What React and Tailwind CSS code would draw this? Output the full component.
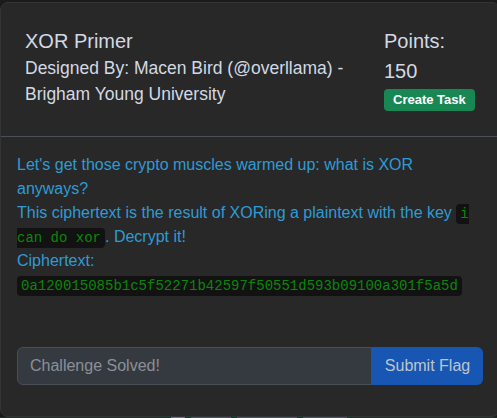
import React from 'react';

const Code = ({ children }) => (
  <code
    className="rounded-[4px] bg-[#121212] px-[4px] py-[2px] text-[14px] leading-none text-[#0b860b]"
    style={{ fontFamily: '"Liberation Mono", monospace' }}
  >
    {children}
  </code>
);

const App = () => {
  return (
    <div
      className="h-[418px] w-[497px] overflow-hidden bg-[#1b1b1b]"
      style={{ fontFamily: '"Liberation Sans", Arial, sans-serif' }}
    >
      <div className="mt-[2px] w-[500px] rounded-[8px] border border-[#333436] bg-[#282828] pb-[31px]">
        {/* header */}
        <div className="flex border-b border-[#4b4f56] pl-[24px] pt-[26px] pb-[25px] text-[#d2d9e5]">
          <div className="w-[360px]">
            <h5 className="text-[20px] leading-[24px]">XOR Primer</h5>
            <p className="mt-[3px] text-[17.5px] leading-[25.5px]">
              Designed By: Macen Bird (@overllama) - Brigham Young University
            </p>
          </div>
          <div className="ml-[-1px]">
            <div className="text-[20px] leading-[24px]">Points:</div>
            <div className="mt-[6px] text-[20px] leading-[24px]">150</div>
            <button className="mt-[6px] flex h-[22px] items-center rounded-[4px] bg-[#198754] px-[9px] text-[13px] font-bold text-white">
              Create Task
            </button>
          </div>
        </div>

        {/* body */}
        <div className="px-[16px] pt-[16px]">
          <div className="text-[16px] leading-[24px] text-[#2f9bd5]">
            Let's get those crypto muscles warmed up: what is XOR anyways?
            <br />
            This ciphertext is the result of XORing a plaintext with the key <Code>i can do xor</Code>. Decrypt it!
            <br />
            Ciphertext:
            <br />
            <Code>0a120015085b1c5f52271b42597f50551d593b09100a301f5a5d</Code>
          </div>

          <div className="mt-[50px] flex h-[38px]">
            <input
              disabled
              placeholder="Challenge Solved!"
              className="min-w-0 flex-1 rounded-l-[6px] border border-[#4a4f57] bg-[#353a41] px-[12px] text-[16px] text-[#d2d9e5] placeholder:text-[#8b9097]"
            />
            <button className="w-[111px] rounded-r-[6px] bg-[#1756b3] text-[16px] text-[#bec5ce]">
              Submit Flag
            </button>
          </div>
        </div>
      </div>
      <div className="flex h-[20px] items-start justify-center gap-[6px] bg-[#0c3a2a] pl-[20px]">
        <span className="h-[3px] w-[14px] bg-[#6c7279]" />
        <span className="h-[3px] w-[40px] bg-[#4d5258]" />
        <span className="h-[3px] w-[60px] bg-[#4d5258]" />
        <span className="h-[3px] w-[44px] bg-[#4d5258]" />
      </div>
    </div>
  );
};

export default App;
